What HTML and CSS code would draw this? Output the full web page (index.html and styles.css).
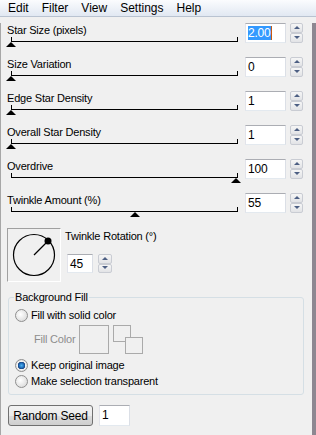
FILE: index.html
```html
<!DOCTYPE html>
<html lang="en">
  <head>
    <meta charset="UTF-8" />
    <title>Star Settings</title>
    <link rel="stylesheet" href="styles.css">
  </head>
  <body>
    <div class="menubar">
      <span>Edit</span>
      <span>Filter</span>
      <span>View</span>
      <span>Settings</span>
      <span>Help</span>
    </div>

    <div class="panel">
      <div class="row first">
        <div class="control">
          <div class="label">Star Size (pixels)</div>
          <div class="slider"><i class="thumb" style="left: 0%"></i></div>
        </div>
        <div class="field"><span class="sel">2.00</span><span class="caret"></span></div>
        <div class="spin"><b class="up"></b><b class="down"></b></div>
      </div>

      <div class="row">
        <div class="control">
          <div class="label">Size Variation</div>
          <div class="slider"><i class="thumb" style="left: 0%"></i></div>
        </div>
        <div class="field">0</div>
        <div class="spin"><b class="up"></b><b class="down"></b></div>
      </div>

      <div class="row">
        <div class="control">
          <div class="label">Edge Star Density</div>
          <div class="slider"><i class="thumb" style="left: 0%"></i></div>
        </div>
        <div class="field">1</div>
        <div class="spin"><b class="up"></b><b class="down"></b></div>
      </div>

      <div class="row">
        <div class="control">
          <div class="label">Overall Star Density</div>
          <div class="slider"><i class="thumb" style="left: 0%"></i></div>
        </div>
        <div class="field">1</div>
        <div class="spin"><b class="up"></b><b class="down"></b></div>
      </div>

      <div class="row">
        <div class="control">
          <div class="label">Overdrive</div>
          <div class="slider"><i class="thumb" style="left: 100%"></i></div>
        </div>
        <div class="field">100</div>
        <div class="spin"><b class="up"></b><b class="down"></b></div>
      </div>

      <div class="row">
        <div class="control">
          <div class="label">Twinkle Amount (%)</div>
          <div class="slider"><i class="thumb" style="left: 55%"></i></div>
        </div>
        <div class="field">55</div>
        <div class="spin"><b class="up"></b><b class="down"></b></div>
      </div>

      <div class="rotation">
        <div class="dial">
          <svg width="52" height="52" viewBox="0 0 52 52">
            <circle cx="26" cy="26" r="20.5" fill="none" stroke="#000" stroke-width="1.2" />
            <line x1="26" y1="26" x2="40" y2="12" stroke="#000" stroke-width="1.2" />
            <circle cx="40" cy="12" r="3.5" fill="#000" />
          </svg>
        </div>
        <div class="rot-side">
          <div class="label">Twinkle Rotation (&deg;)</div>
          <div class="rot-input">
            <div class="field small">45</div>
            <div class="spin"><b class="up"></b><b class="down"></b></div>
          </div>
        </div>
      </div>

      <fieldset class="group">
        <legend>Background Fill</legend>
        <div class="option"><span class="radio"></span>Fill with solid color</div>
        <div class="color-row">
          <span class="muted">Fill Color</span>
          <span class="swatch"></span>
          <span class="swap">
            <span class="sq one"></span>
            <span class="sq two"></span>
          </span>
        </div>
        <div class="option"><span class="radio checked"></span>Keep original image</div>
        <div class="option"><span class="radio"></span>Make selection transparent</div>
      </fieldset>

      <div class="seed">
        <button class="btn">Random Seed</button>
        <div class="field seed-field">1</div>
      </div>
    </div>
  </body>
</html>
```

FILE: styles.css
```css
html,
body {
  margin: 0;
  height: 100%;
}
body {
  font-family: "Liberation Sans", Arial, sans-serif;
  font-size: 11px;
  letter-spacing: -0.2px;
  color: #000;
  background: #f0f0f0;
  overflow: hidden;
}
.menubar {
  height: 16px;
  display: flex;
  align-items: center;
  gap: 13px;
  padding-left: 8px;
  font-size: 12px;
  letter-spacing: 0;
  background: linear-gradient(#fbfcfe, #e1e8f2);
  border-bottom: 1px solid #b9c3d1;
}
.panel {
  box-sizing: border-box;
  height: calc(100% - 17px);
  padding-left: 6px;
  border-left: 1px solid #a7a7a7;
  border-right: 4px solid #8d8791;
  border-bottom: 3px solid #8d8791;
}
.row {
  display: flex;
  height: 34px;
}
.row.first {
  margin-top: 6px;
}
.control {
  width: 238px;
}
.label {
  height: 14px;
  line-height: 15px;
}
.slider {
  position: relative;
  margin-left: 4px;
  width: 225px;
  height: 4px;
  border: 1px solid #000;
  border-top: none;
}
.thumb {
  position: absolute;
  top: 5px;
  margin-left: -6px;
  width: 0;
  height: 0;
  border-left: 5px solid transparent;
  border-right: 5px solid transparent;
  border-bottom: 5px solid #000;
}
.field {
  box-sizing: border-box;
  width: 41px;
  height: 20px;
  padding: 2px 0 0 2px;
  font-size: 12px;
  line-height: 15px;
  background: #fff;
  border: 1px solid;
  border-color: #abadb3 #dbdfe6 #e3e9ef #e2e3ea;
}
.sel {
  background: #3399ff;
  color: #fff;
}
.caret {
  display: inline-block;
  width: 1px;
  height: 14px;
  vertical-align: top;
  background: #c85a10;
}
.spin {
  display: flex;
  flex-direction: column;
  margin-left: 4px;
  width: 13px;
  height: 20px;
}
.spin b {
  position: relative;
  flex: 1;
  box-sizing: border-box;
  border: 1px solid #c9ccd3;
  border-radius: 2px;
  background: linear-gradient(#f6f6f6, #e2e3e6);
}
.spin b::after {
  content: "";
  position: absolute;
  left: 50%;
  top: 50%;
  margin: -2px 0 0 -3px;
  border-left: 3px solid transparent;
  border-right: 3px solid transparent;
}
.spin .up::after {
  border-bottom: 3px solid #4d5f83;
}
.spin .down::after {
  border-top: 3px solid #4d5f83;
}
.rotation {
  display: flex;
  margin-top: 1px;
}
.dial {
  width: 52px;
  height: 52px;
  border: 1px solid;
  border-color: #a0a0a0 #ffffff #ffffff #a0a0a0;
}
.rot-side {
  margin-left: 4px;
}
.rot-side .label {
  margin-top: 1px;
}
.rot-input {
  display: flex;
  margin: 11px 0 0 2px;
}
.field.small {
  width: 26px;
  height: 19px;
}
.rot-input .spin {
  margin-left: 5px;
  width: 14px;
  height: 19px;
}
.group {
  margin: 8px 8px 0 1px;
  padding: 3px 5px 5px 6px;
  border: 1px solid #d5dfe5;
  border-radius: 3px;
}
.group legend {
  padding: 0 1px;
  margin-left: -1px;
  line-height: 14px;
}
.option {
  display: flex;
  align-items: center;
  height: 16px;
}
.radio {
  box-sizing: border-box;
  width: 13px;
  height: 13px;
  margin-right: 3px;
  border-radius: 50%;
  border: 1px solid #8f8f8f;
  background: radial-gradient(circle at 40% 40%, #ffffff, #d3d3d3);
}
.radio.checked {
  background: radial-gradient(circle, #4fb3f2 0, #1e6bb8 2.5px, #173f7c 3.5px, #f4f4f4 4px, #dcdcdc 6px);
}
.color-row {
  display: flex;
  height: 29px;
  margin: 2px 0 3px;
}
.muted {
  color: #8d8d8d;
  margin: 8px 0 0 19px;
  width: 45px;
}
.swatch {
  box-sizing: border-box;
  width: 30px;
  height: 29px;
  border: 1px solid #aaaaaa;
}
.swap {
  position: relative;
  width: 31px;
  height: 29px;
  margin-left: 4px;
}
.sq {
  position: absolute;
  box-sizing: border-box;
  width: 18px;
  height: 17px;
  border: 1px solid #aaaaaa;
}
.sq.one {
  left: 0;
  top: 0;
}
.sq.two {
  left: 12px;
  top: 12px;
  background: #f0f0f0;
}
.seed {
  display: flex;
  gap: 6px;
  margin: 10px 0 0 1px;
}
.btn {
  box-sizing: border-box;
  width: 85px;
  height: 21px;
  padding: 0;
  font-family: inherit;
  font-size: 12px;
  letter-spacing: -0.2px;
  border: 1px solid #707070;
  border-radius: 3px;
  background: linear-gradient(#f2f2f2 0, #ebebeb 50%, #dddddd 51%, #cfcfcf 100%);
}
.seed-field {
  width: 31px;
  height: 21px;
}
```
